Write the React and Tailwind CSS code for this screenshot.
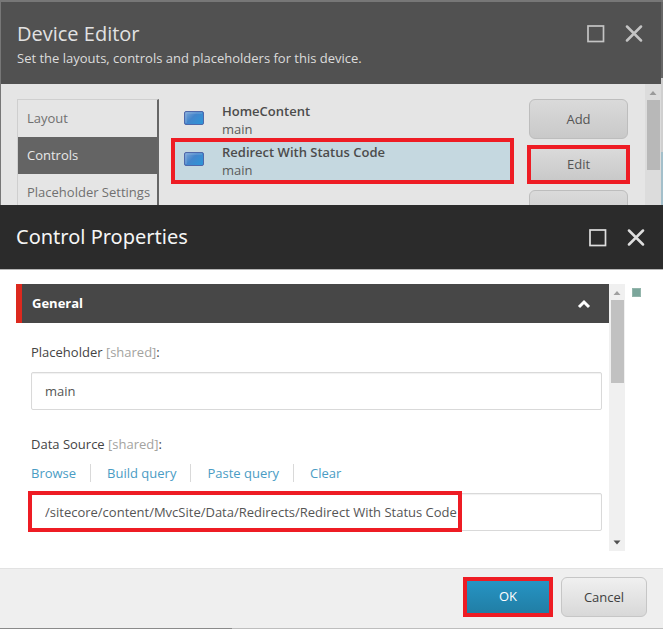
import clsx from "clsx"
import { useState } from "react"

const TABS = ["Layout", "Controls", "Placeholder Settings"]

const RENDERINGS = [
  { id: "home", name: "HomeContent", placeholder: "main" },
  { id: "redirect", name: "Redirect With Status Code", placeholder: "main" },
]

const ACTIONS = ["Add", "Edit", "Personalize"]

const LINKS = ["Browse", "Build query", "Paste query", "Clear"]

function WindowButtons({ className }) {
  return (
    <div className={clsx("flex gap-[20px]", className)}>
      <button type="button" aria-label="Maximize" className="block size-[18px]">
        <svg viewBox="0 0 18 18" className="block size-[18px]" fill="none" stroke="currentColor">
          <rect x="1" y="1" width="15.5" height="15.5" strokeWidth="1.7" />
        </svg>
      </button>
      <button type="button" aria-label="Close" className="block size-[18px]">
        <svg viewBox="0 0 18 18" className="block size-[18px]" fill="none" stroke="currentColor">
          <path d="M2 1.500 16 15.500M16 1.500 2 15.500" strokeWidth="2.5" strokeLinecap="round" />
        </svg>
      </button>
    </div>
  )
}

function RenderingIcon() {
  return (
    <svg viewBox="0 0 20 14" className="block h-[14px] w-[20px] shrink-0">
      <defs>
        <linearGradient id="rendering" x1="0" y1="0" x2="1" y2="0.7">
          <stop offset="0" stopColor="#86abd8" />
          <stop offset="0.5" stopColor="#4385cc" />
          <stop offset="1" stopColor="#2f93d6" />
        </linearGradient>
      </defs>
      <rect x="0.5" y="0.5" width="19" height="13" rx="1.5" fill="url(#rendering)" stroke="#4f68aa" />
      <path d="M2 12V2h16" fill="none" stroke="#8fb4e0" strokeOpacity="0.6" />
    </svg>
  )
}

function Scrollbar({ className, thumbClassName, arrowClassName, end }) {
  return (
    <div aria-hidden="true" className={clsx("flex w-[16px] shrink-0 flex-col items-center", className)}>
      <svg viewBox="0 0 16 16" className={clsx("block size-[16px] shrink-0", arrowClassName)}>
        <path d="M4.5 11 8 7l3.5 4z" fill="currentColor" />
      </svg>
      <div className={clsx("w-[13px] shrink-0", thumbClassName)} />
      {end && (
        <svg viewBox="0 0 16 16" className="mt-auto block size-[16px] shrink-0 text-[#505050]">
          <path d="M4.5 5.5 8 9.5l3.5-4z" fill="currentColor" />
        </svg>
      )}
    </div>
  )
}

function DeviceEditor() {
  const [tab, setTab] = useState("Controls")
  const [selected, setSelected] = useState("redirect")

  return (
    <section className="flex bg-[#777777] pt-[2px] pl-px">
      <div className="min-w-0 flex-1">
        <header className="flex h-[82px] items-start justify-between bg-[#515151] pr-[18px] pl-[16px]">
          <div className="pt-[18px]">
            <h1 className="text-[20px] leading-[28px] text-[#e2e2e2]">Device Editor</h1>
            <p className="text-[13px] leading-[20px] text-[#dcdcdc]">
              Set the layouts, controls and placeholders for this device.
            </p>
          </div>
          <WindowButtons className="pt-[23px] text-[#c4c4c4]" />
        </header>

        <div className="flex h-[121px] overflow-hidden bg-[#e5e5e5]">
          <nav className="mt-[15px] ml-[16px] w-[142px] shrink-0 border-t border-r-2 border-l border-t-[#cfcfcf] border-r-[#666666] border-l-[#cfcfcf]">
            {TABS.map((name) => (
              <button
                key={name}
                type="button"
                onClick={() => setTab(name)}
                className={clsx(
                  "block h-[37px] w-full pl-[9px] text-left text-[13px] whitespace-nowrap",
                  name === tab ? "bg-[#646464] text-[#e8e8e8]" : "text-[#707070]"
                )}
              >
                {name}
              </button>
            ))}
          </nav>

          <ul className="mt-[14px] ml-[12px] min-w-0 flex-1">
            {RENDERINGS.map((item) => (
              <li key={item.id}>
                <button
                  type="button"
                  onClick={() => setSelected(item.id)}
                  className={clsx(
                    "flex w-full items-start border-4 px-[9px] text-left text-[13px] leading-[18px] text-[#5a5a5a]",
                    item.id === selected
                      ? "h-[46px] border-[#ee1c24] bg-[#c5d8e0] pt-px"
                      : "h-[40px] border-transparent"
                  )}
                >
                  <span className="pt-[9px]">
                    <RenderingIcon />
                  </span>
                  <span className="pl-[18px]">
                    <span className="block font-semibold text-[#4c4c4c]">{item.name}</span>
                    <span className="block">{item.placeholder}</span>
                  </span>
                </button>
              </li>
            ))}
          </ul>

          <div className="mt-[15px] mr-[17px] ml-[15px] flex w-[99px] shrink-0 flex-col gap-[6px]">
            {ACTIONS.map((name) => (
              <button
                key={name}
                type="button"
                className={clsx(
                  "shrink-0 bg-linear-to-b from-[#dadada] to-[#c9c9c9] text-[13px] text-[#555555]",
                  name === "Edit"
                    ? "-mx-[2px] h-[39px] border-4 border-[#ee1c24]"
                    : "h-[40px] rounded-[6px] border border-[#bdbdbd] pt-px"
                )}
              >
                {name}
              </button>
            ))}
          </div>

          <Scrollbar
            className="bg-[#dcdcdc]"
            thumbClassName="h-[70px] bg-[#b8b8b8]"
            arrowClassName="text-[#9a9a9a]"
          />
        </div>
      </div>

      {/* edge of the page behind the dialog */}
      <div className="flex w-[2px] shrink-0 flex-col">
        <div className="h-[76px] bg-[#666666]" />
        <div className="h-[74px] bg-[#cfcfcf]" />
        <div className="flex-1 bg-[#a3bfca]" />
      </div>
    </section>
  )
}

function FieldLabel({ htmlFor, children }) {
  return (
    <label htmlFor={htmlFor} className="block text-[13px] leading-[20px] text-[#444444]">
      {children} <span className="text-[#a3a3a0]">[shared]</span>:
    </label>
  )
}

const inputClass =
  "block h-[38px] w-full rounded-[2px] border border-[#d9d9d9] bg-white px-[13px] text-[13px] text-[#555555] shadow-[inset_0_1px_1px_rgba(0,0,0,0.06)] outline-none"

function ControlProperties() {
  const [placeholder, setPlaceholder] = useState("main")
  const [source, setSource] = useState("/sitecore/content/MvcSite/Data/Redirects/Redirect With Status Code")
  const [open, setOpen] = useState(true)

  return (
    <section className="bg-white">
      <header className="flex h-[65px] items-start justify-between border-b border-[#b5b5b5] bg-[#2b2b2b] pr-[18px] pl-[16px]">
        <h2 className="pt-[18px] font-['Noto_Sans','Open_Sans',sans-serif] text-[20px] leading-[28px] text-[#f5f5f5]">
          Control Properties
        </h2>
        <WindowButtons className="pt-[24px] text-[#dedede]" />
      </header>

      <div className="flex pt-[14px] pb-[17px] pl-[16px]">
        <div className="min-w-0 flex-1 pb-[20px]">
          <button
            type="button"
            aria-expanded={open}
            onClick={() => setOpen(!open)}
            className="flex h-[39px] w-full items-center justify-between border-l-6 border-[#dc291e] bg-[#474747] pr-[18px] pl-[10px] text-[13px] font-bold text-white"
          >
            General
            <svg viewBox="0 0 14 10" className={clsx("block h-[10px] w-[14px]", !open && "rotate-180")}>
              <path d="M2 8 7 3l5 5" fill="none" stroke="currentColor" strokeWidth="3" />
            </svg>
          </button>

          {open && (
            <div className="pt-[19px] pr-[7px] pl-[15px]">
              <FieldLabel htmlFor="placeholder">Placeholder</FieldLabel>
              <input
                id="placeholder"
                type="text"
                value={placeholder}
                onChange={(e) => setPlaceholder(e.target.value)}
                className={clsx(inputClass, "mt-[10px] mb-[24px]")}
              />

              <FieldLabel htmlFor="source">Data Source</FieldLabel>
              <div className="mt-[10px] mb-[11px] flex">
                {LINKS.map((name) => (
                  <a
                    key={name}
                    href="#"
                    className="mr-[16px] border-r border-[#d9d9d9] pr-[14px] text-[13px] leading-[18px] text-[#4a9cc4] last:mr-0 last:border-r-0"
                  >
                    {name}
                  </a>
                ))}
              </div>
              <div className="relative">
                <input
                  id="source"
                  type="text"
                  value={source}
                  onChange={(e) => setSource(e.target.value)}
                  className={inputClass}
                />
                <div className="pointer-events-none absolute -top-[2px] -left-[3px] h-[41px] w-[434px] border-4 border-[#ee1c24]" />
              </div>
            </div>
          )}
        </div>

        <Scrollbar
          className="bg-[#f0f0f0]"
          thumbClassName="h-[83px] bg-[#c1c1c1]"
          arrowClassName="text-[#a0a0a0]"
          end
        />
        <div className="w-[38px] shrink-0 pt-[4px] pl-[7px]">
          <div className="size-[9px] border border-[#93b5ab] bg-[#7ba69b]" />
        </div>
      </div>

      <footer className="flex h-[60px] items-start justify-end gap-[8px] border-t border-[#e2e2e2] bg-[#efefef] pt-[8px] pr-[16px]">
        <button
          type="button"
          className="h-[40px] w-[90px] border-4 border-[#ee1c24] bg-linear-to-b from-[#2694c4] to-[#217ea5] text-[13px] text-white"
        >
          OK
        </button>
        <button
          type="button"
          className="h-[40px] w-[86px] rounded-[6px] border border-[#c6c6c6] bg-linear-to-b from-[#f0f0f0] to-[#d8d8d8] pt-px text-[13px] text-[#3f3f3f]"
        >
          Cancel
        </button>
      </footer>
    </section>
  )
}

export default function App() {
  return (
    <main className="font-['Open_Sans',sans-serif]">
      <DeviceEditor />
      <ControlProperties />
      <div className="flex h-px bg-[#bdbdbd]">
        <div className="w-[35%] bg-[#8a8a8a]" />
      </div>
    </main>
  )
}
